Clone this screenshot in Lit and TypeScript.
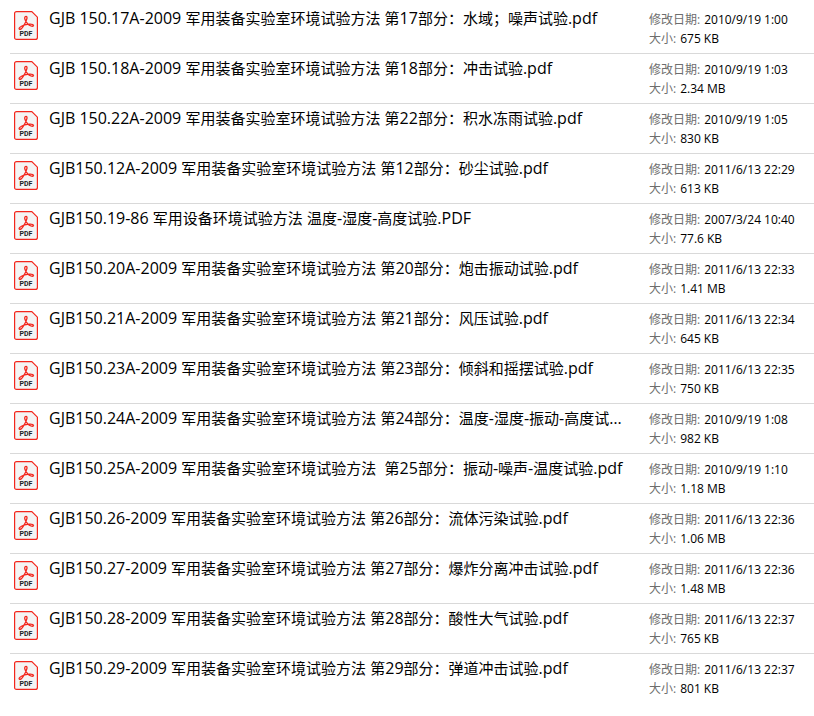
import { LitElement, html, css, svg } from "lit";
import { customElement, property } from "lit/decorators.js";

interface FileItem {
  name: string;
  modified: string;
  size: string;
}

const files: FileItem[] = [
  { name: "GJB 150.17A-2009 军用装备实验室环境试验方法 第17部分：水域；噪声试验.pdf", modified: "2010/9/19 1:00", size: "675 KB" },
  { name: "GJB 150.18A-2009 军用装备实验室环境试验方法 第18部分：冲击试验.pdf", modified: "2010/9/19 1:03", size: "2.34 MB" },
  { name: "GJB 150.22A-2009 军用装备实验室环境试验方法 第22部分：积水冻雨试验.pdf", modified: "2010/9/19 1:05", size: "830 KB" },
  { name: "GJB150.12A-2009 军用装备实验室环境试验方法 第12部分：砂尘试验.pdf", modified: "2011/6/13 22:29", size: "613 KB" },
  { name: "GJB150.19-86 军用设备环境试验方法 温度-湿度-高度试验.PDF", modified: "2007/3/24 10:40", size: "77.6 KB" },
  { name: "GJB150.20A-2009 军用装备实验室环境试验方法 第20部分：炮击振动试验.pdf", modified: "2011/6/13 22:33", size: "1.41 MB" },
  { name: "GJB150.21A-2009 军用装备实验室环境试验方法 第21部分：风压试验.pdf", modified: "2011/6/13 22:34", size: "645 KB" },
  { name: "GJB150.23A-2009 军用装备实验室环境试验方法 第23部分：倾斜和摇摆试验.pdf", modified: "2011/6/13 22:35", size: "750 KB" },
  { name: "GJB150.24A-2009 军用装备实验室环境试验方法 第24部分：温度-湿度-振动-高度试验.pdf", modified: "2010/9/19 1:08", size: "982 KB" },
  { name: "GJB150.25A-2009 军用装备实验室环境试验方法  第25部分：振动-噪声-温度试验.pdf", modified: "2010/9/19 1:10", size: "1.18 MB" },
  { name: "GJB150.26-2009 军用装备实验室环境试验方法 第26部分：流体污染试验.pdf", modified: "2011/6/13 22:36", size: "1.06 MB" },
  { name: "GJB150.27-2009 军用装备实验室环境试验方法 第27部分：爆炸分离冲击试验.pdf", modified: "2011/6/13 22:36", size: "1.48 MB" },
  { name: "GJB150.28-2009 军用装备实验室环境试验方法 第28部分：酸性大气试验.pdf", modified: "2011/6/13 22:37", size: "765 KB" },
  { name: "GJB150.29-2009 军用装备实验室环境试验方法 第29部分：弹道冲击试验.pdf", modified: "2011/6/13 22:37", size: "801 KB" },
];

const pdfMark = svg`
  <path d="M2.6 .6H17.8L23.4 6.2V26.4Q23.4 28.4 21.4 28.4H2.6Q.6 28.4 .6 26.4V2.6Q.6 .6 2.6 .6Z"
    fill="#f4f4f4" stroke="#f3261c" stroke-width="1.2" />
  <path d="M12 5.4C10.5 5.4 10.4 7.4 11.2 9C12.4 11.7 14.8 14.2 17 15C18.7 15.6 19.8 15.1 19.5 14.2C19.2 13.2 17.2 12.9 15 13.1C12 13.3 9 14.2 7 15.5C5.2 16.6 4.7 17.6 5.4 18.2C6.3 18.8 7.9 17.6 9.2 15.5C10.9 12.8 12.4 10 12.9 7.6C13.2 6.2 12.9 5.4 12 5.4Z"
    fill="none" stroke="#f3261c" stroke-width="1.3" stroke-linejoin="round" />
`;

/** Splits a file name into alternating Latin and Chinese runs. */
const runs = (name: string) => name.match(/[\x20-\x7e]+|[^\x20-\x7e]+/g) ?? [];

@customElement("file-row")
export class FileRow extends LitElement {
  static styles = css`
    :host {
      display: grid;
      grid-template-columns: 24px minmax(0, 1fr) 165px;
      align-items: start;
      box-sizing: border-box;
      min-height: 50px;
      padding-left: 4px;
      border-bottom: 1px solid #d9d9d9;
      color: #000;
    }
    :host([last]) {
      border-bottom-color: transparent;
    }
    .icon {
      display: block;
      width: 24px;
      height: 29px;
      margin-top: 7px;
    }
    .tag {
      font: 700 7px "Liberation Sans Narrow", "Roboto", sans-serif;
      fill: #222;
    }
    .name {
      margin: 3px 24px 0 11px;
      font-size: 16px;
      line-height: 22px;
      white-space: pre;
      overflow: hidden;
      text-overflow: ellipsis;
    }
    .han {
      font-size: 15px;
    }
    .meta {
      margin: 6px 0 0;
      font-size: 12px;
      line-height: 19px;
      white-space: nowrap;
    }
    .meta div {
      display: flex;
      gap: 4px;
    }
    dt {
      color: #6d6d6d;
    }
    dd {
      margin: 0;
    }
  `;

  @property({ attribute: false }) file!: FileItem;

  render() {
    const { name, modified, size } = this.file;
    return html`
      <svg class="icon" viewBox="0 0 24 29" role="img" aria-label="PDF">
        ${pdfMark}
        <text class="tag" x="12" y="25" text-anchor="middle">PDF</text>
      </svg>
      <div class="name" title=${name}>${runs(name).map((run) =>
        /^[\x20-\x7e]/.test(run) ? run : html`<span class="han">${run}</span>`
      )}</div>
      <dl class="meta">
        <div><dt>修改日期:</dt><dd>${modified}</dd></div>
        <div><dt>大小:</dt><dd>${size}</dd></div>
      </dl>
    `;
  }
}

@customElement("app-root")
export class AppRoot extends LitElement {
  static styles = css`
    :host {
      display: block;
      min-height: 100vh;
      box-sizing: border-box;
      padding: 4px 0 0 10px;
      background: #fff;
      font-family: "Open Sans", "Noto Sans CJK SC", sans-serif;
    }
    .list {
      margin: 0;
      padding: 0;
      list-style: none;
    }
  `;

  render() {
    return html`
      <ul class="list">
        ${files.map(
          (file, i) => html`<li><file-row .file=${file} ?last=${i === files.length - 1}></file-row></li>`
        )}
      </ul>
    `;
  }
}
